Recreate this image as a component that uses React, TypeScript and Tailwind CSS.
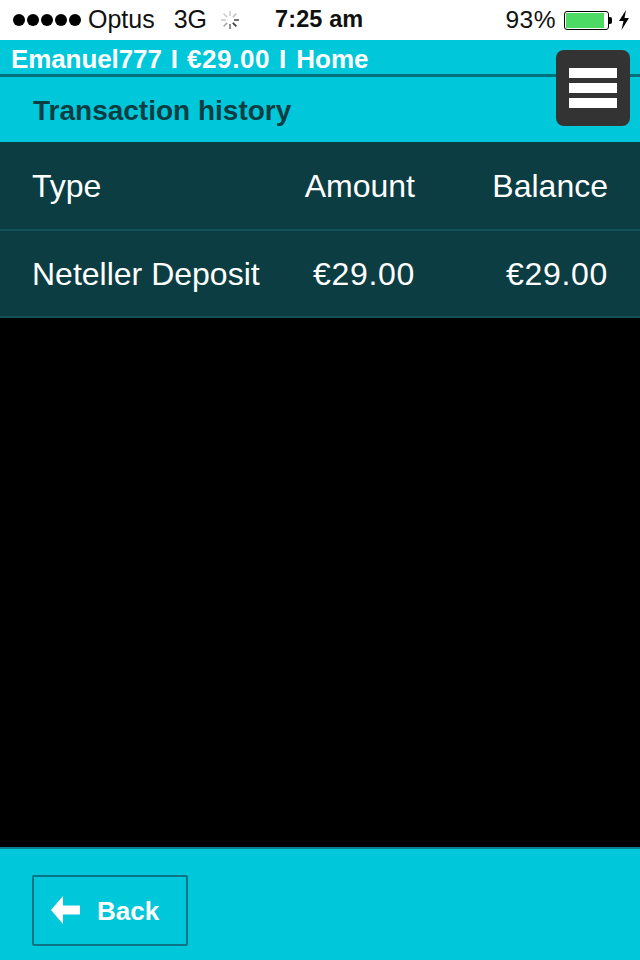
import React from 'react';

const Spinner = () => (
  <svg width="22" height="22" viewBox="0 0 22 22" className="ml-[12px]">
    {[0, 45, 90, 135, 180, 225, 270, 315].map((deg, i) => (
      <line
        key={deg}
        x1="11"
        y1="2"
        x2="11"
        y2="7"
        stroke={['#d0d0d0', '#c4c4c4', '#555555', '#333333', '#777777', '#aaaaaa', '#c8c8c8', '#d0d0d0'][i]}
        strokeWidth="1.6"
        transform={`rotate(${deg} 11 11)`}
      />
    ))}
  </svg>
);

const StatusBar = () => (
  <div className="h-10 bg-white flex items-center text-[25px] text-[#111111] relative">
    <div className="flex items-center gap-[2px] ml-[13px]">
      {[0, 1, 2, 3, 4].map((i) => (
        <span key={i} className="w-[12px] h-[12px] rounded-full bg-black" />
      ))}
    </div>
    <span className="ml-[7px]">Optus</span>
    <span className="ml-[19px]">3G</span>
    <Spinner />
    <span className="ml-[34px] font-bold text-[23.5px] tracking-[0.1px]">7:25 am</span>
    <div className="ml-auto flex items-center">
      <span className="text-[24.5px] tracking-[0.5px]">93%</span>
      <div className="ml-[8px] w-[45px] h-[19px] rounded-[3px] border border-black p-[1px]">
        <div className="h-full w-[38px] bg-[#4cd964]" />
      </div>
      <div className="w-[3px] h-[7px] bg-black rounded-r-[2px]" />
      <svg width="12" height="22" viewBox="0 0 12 22" className="ml-[6px] mr-[10px]">
        <path d="M8 1 L1 12 H5.5 L3.5 21 L11 9 H6.5 Z" fill="#000000" />
      </svg>
    </div>
  </div>
);

const Row = ({ type, amount, balance, height, money }: { type: string; amount: string; balance: string; height: string; money?: boolean }) => (
  <div className={`${height} flex items-center border-b-2 border-[#14525a] pl-[32px] pr-[32px] text-white text-[32px]`}>
    <span className="flex-1 whitespace-nowrap">{type}</span>
    <span className={money ? 'w-[130px] text-right tracking-[0.7px]' : 'w-[130px] text-right'}>{amount}</span>
    <span className={money ? 'w-[193px] text-right tracking-[0.7px]' : 'w-[193px] text-right'}>{balance}</span>
  </div>
);

export default function App() {
  return (
    <div className="w-[640px] h-[960px] bg-black flex flex-col relative overflow-hidden font-['Liberation_Sans',Arial,sans-serif]">
      <StatusBar />

      <div className="h-[37px] bg-[#00c8da] border-b-[3px] border-[#00707c] flex items-center pl-[11px] pt-[5px] text-white font-bold text-[26px] whitespace-nowrap">
        <span className="tracking-[-0.1px]">Emanuel777</span>
        <span className="ml-[9px]">I</span>
        <span className="ml-[9px] tracking-[0.6px]">€29.00</span>
        <span className="ml-[9px]">I</span>
        <span className="ml-[10px]">Home</span>
      </div>

      <div className="h-[65px] bg-[#00c8da] flex items-center pl-[33px] pt-[3px] text-[#0b3d43] font-bold text-[28px]">
        Transaction history
      </div>

      <div className="bg-[#0b3d43]">
        <Row height="h-[89px]" type="Type" amount="Amount" balance="Balance" />
        <Row height="h-[87px]" type="Neteller Deposit" amount="€29.00" balance="€29.00" money />
      </div>

      <div className="flex-1 bg-black" />

      <div className="h-[113px] bg-[#00c8da] border-t-2 border-[#0a7f8e] flex items-start pl-[32px] pt-[26px]">
        <button className="w-[156px] h-[71px] border-2 border-[#0b7485] rounded-[2px] flex items-center pl-[17px] pt-[1px] text-white font-bold text-[26px]">
          <svg width="29" height="28" viewBox="0 0 29 28" className="-mt-[2px]">
            <path d="M0 14 L12 0 V9.5 H29 V18.5 H12 V28 Z" fill="#ffffff" />
          </svg>
          <span className="ml-[17px]">Back</span>
        </button>
      </div>

      <button className="absolute left-[556px] top-[50px] w-[74px] h-[76px] rounded-[8px] bg-[#333333] flex flex-col items-center justify-center gap-[5px]">
        <span className="w-[48px] h-[10px] bg-white" />
        <span className="w-[48px] h-[10px] bg-white" />
        <span className="w-[48px] h-[10px] bg-white" />
      </button>
    </div>
  );
}
